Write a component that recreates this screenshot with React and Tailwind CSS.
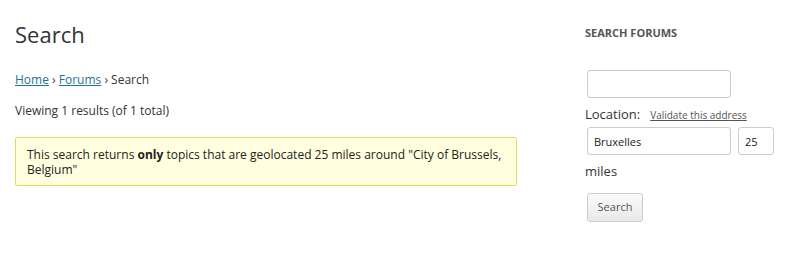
import React from 'react';

const App = () => {
    return (
        <div className="flex w-[795px] h-[267px] bg-white text-[#333] font-['Open_Sans',sans-serif] overflow-hidden">
            {/* Main column */}
            <div className="w-[502px] ml-[15px] flex-shrink-0">
                <h1 className="text-[22px] leading-[30px] font-normal text-[#333] mt-[19px]">Search</h1>
                <div className="mt-[22px] text-[12px] leading-[18px]">
                    <a href="#" className="text-[#21759b] underline">Home</a>
                    <span> › </span>
                    <a href="#" className="text-[#21759b] underline">Forums</a>
                    <span> › Search</span>
                </div>
                <div className="mt-[13px] text-[12px] leading-[18px]">Viewing 1 results (of 1 total)</div>
                <div className="mt-[17px] border border-[#e6db55] bg-[#ffffe0] rounded-[2px] pl-[11px] pr-[12px] pt-[9px] pb-[8px] text-[12px] leading-[15px] text-[#222]">
                    This search returns <b>only</b> topics that are geolocated 25 miles around "City of Brussels, Belgium"
                </div>
            </div>

            {/* Sidebar */}
            <div className="ml-[68px] w-[200px]">
                <h3 className="mt-[26px] text-[11px] leading-[13px] font-bold text-[#555] uppercase">Search forums</h3>
                <input type="text" className="block mt-[31px] ml-[2px] w-[144px] h-[28px] border border-[#ccc] rounded-[3px] bg-white" />
                <div className="flex items-baseline mt-[6px] h-[22px]">
                    <span className="text-[13px] leading-[20px] text-[#333]">Location:</span>
                    <a href="#" className="ml-[10px] text-[10px] text-[#555] underline">Validate this address</a>
                </div>
                <div className="flex mt-[1px] ml-[2px]">
                    <input type="text" defaultValue="Bruxelles" className="w-[144px] h-[28px] border border-[#ccc] rounded-[3px] px-[6px] text-[11px] text-[#222] bg-white" />
                    <input type="text" defaultValue="25" className="ml-[7px] w-[36px] h-[28px] border border-[#ccc] rounded-[3px] px-[6px] text-[11px] text-[#222] bg-white" />
                </div>
                <div className="mt-[6px] text-[13px] leading-[20px] text-[#333]">miles</div>
                <button className="block mt-[12px] ml-[2px] w-[56px] h-[29px] border border-[#ccc] rounded-[3px] bg-gradient-to-b from-[#fafafa] to-[#e9e9e9] text-[11px] text-[#555]">Search</button>
            </div>
        </div>
    );
};

export default App;
